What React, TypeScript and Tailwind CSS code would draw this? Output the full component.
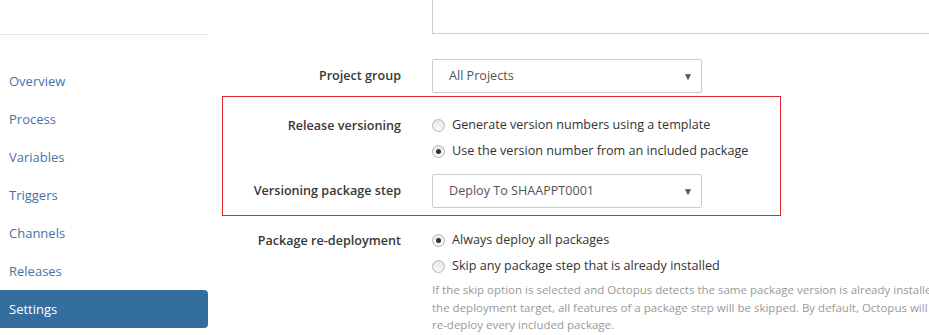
import React from "react";

const navItems = ["Overview", "Process", "Variables", "Triggers", "Channels", "Releases", "Settings"];

const Radio = ({ checked }: { checked?: boolean }) => (
	<span className="relative inline-flex h-[13px] w-[13px] shrink-0 items-center justify-center rounded-full border border-[#b5b5b5] bg-gradient-to-b from-[#e6e6e6] to-[#fafafa]">
		{checked && <span className="h-[5px] w-[5px] rounded-full bg-[#333]" />}
	</span>
);

const RadioOption = ({ checked, label }: { checked?: boolean; label: string }) => (
	<div className="flex h-[26px] items-center gap-[7px]">
		<Radio checked={checked} />
		<span className="pt-px text-[12.6px] text-[#333]">{label}</span>
	</div>
);

const Select = ({ value }: { value: string }) => (
	<div className="flex h-[34px] w-[270px] items-center justify-between rounded-[2px] border border-[#cccccc] bg-white pl-[16px] pr-[8px] text-[12.6px] text-[#555]">
		<span className="pt-px">{value}</span>
		<span className="text-[10px] text-[#555]">▼</span>
	</div>
);

const Label = ({ children }: { children: React.ReactNode }) => (
	<div className="w-[194px] shrink-0 pr-[16px] pt-px text-right text-[12.6px] font-semibold text-[#383838]">
		{children}
	</div>
);

export default function App() {
	return (
		<div
			className="flex h-[335px] w-[929px] overflow-hidden bg-white"
			style={{ fontFamily: '"Open Sans", "Noto Sans", sans-serif' }}
		>
			{/* sidebar */}
			<div className="w-[208px] shrink-0">
				<div className="h-[35px] border-b border-[#e3e3e3]" />
				<div className="mt-[27px] flex flex-col">
					{navItems.map((item) => (
						<div
							key={item}
							className={
								item === "Settings"
									? "flex h-[38px] items-center rounded-r-[4px] bg-[#336e9f] pl-[9px] pt-px text-[13px] text-white"
									: "flex h-[38px] items-center pl-[9px] pt-[2px] text-[13px] text-[#4574a8]"
							}
						>
							{item}
						</div>
					))}
				</div>
			</div>

			{/* main */}
			<div className="ml-[15px] flex flex-1 flex-col">
				<div className="flex">
					<div className="w-[194px] shrink-0" />
					<div className="ml-[15px] h-[34px] flex-1 border border-t-0 border-r-0 border-[#cccccc]" />
				</div>

				<div className="mt-[25px] flex items-center">
					<Label>Project group</Label>
					<div className="ml-[15px]">
						<Select value="All Projects" />
					</div>
				</div>

				<div className="-ml-px mt-[3px] w-[559px] border border-[#e3262b] pb-[7px] pt-[15px]">
					<div className="flex">
						<Label>
							<div className="flex h-[26px] items-center justify-end">Release versioning</div>
						</Label>
						<div className="ml-[15px] flex flex-col">
							<RadioOption label="Generate version numbers using a template" />
							<RadioOption checked label="Use the version number from an included package" />
						</div>
					</div>
					<div className="mt-[10px] flex items-center">
						<Label>Versioning package step</Label>
						<div className="ml-[15px]">
							<Select value="Deploy To SHAAPPT0001" />
						</div>
					</div>
				</div>

				<div className="mt-[11px] flex">
					<Label>
						<div className="flex h-[26px] items-center justify-end">Package re-deployment</div>
					</Label>
					<div className="ml-[15px] flex flex-col">
						<RadioOption checked label="Always deploy all packages" />
						<RadioOption label="Skip any package step that is already installed" />
						<p className="mt-[2px] whitespace-nowrap text-[11.5px] leading-[17.5px] text-[#999]">
							If the skip option is selected and Octopus detects the same package version is already installed on
							<br />
							the deployment target, all features of a package step will be skipped. By default, Octopus will always
							<br />
							re-deploy every included package.
						</p>
					</div>
				</div>
			</div>
		</div>
	);
}
